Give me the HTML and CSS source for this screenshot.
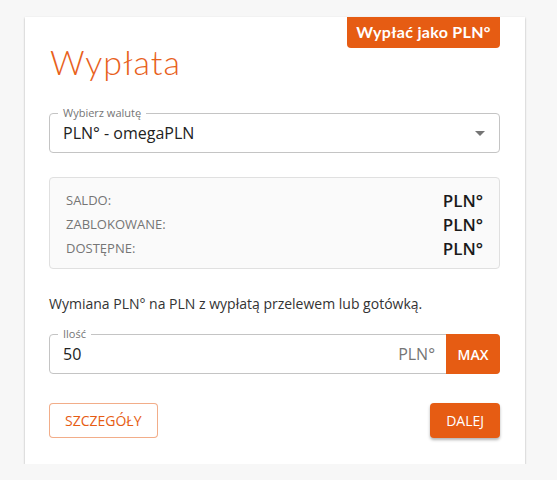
FILE: index.html
```html
<!DOCTYPE html>
<html lang="pl">
<head>
    <meta charset="UTF-8">
    <meta name="viewport" content="width=device-width, initial-scale=1.0">
    <title>Wypłata</title>
    <link rel="stylesheet" href="styles.css">
</head>
<body>
    <div class="card">
        <div class="badge">Wypłać jako PLN°</div>

        <h1 class="title">Wypłata</h1>

        <div class="field select-field">
            <span class="field-label">Wybierz walutę</span>
            <div class="field-value">PLN° - omegaPLN</div>
            <span class="arrow"></span>
        </div>

        <div class="balance-box">
            <div class="balance-row">
                <span class="balance-label">Saldo:</span>
                <span class="balance-value">PLN°</span>
            </div>
            <div class="balance-row">
                <span class="balance-label">Zablokowane:</span>
                <span class="balance-value">PLN°</span>
            </div>
            <div class="balance-row">
                <span class="balance-label">Dostępne:</span>
                <span class="balance-value">PLN°</span>
            </div>
        </div>

        <p class="description">Wymiana PLN° na PLN z wypłatą przelewem lub gotówką.</p>

        <div class="field amount-field">
            <span class="field-label">Ilość</span>
            <div class="field-value">50</div>
            <span class="unit">PLN°</span>
            <button class="max-button">MAX</button>
        </div>

        <div class="actions">
            <button class="btn btn-outline">Szczegóły</button>
            <button class="btn btn-primary">Dalej</button>
        </div>
    </div>
</body>
</html>
```

FILE: styles.css
```css
/* Base */
body {
    margin: 0;
    padding: 17px 32px 0 25px;
    background-color: #f7f7f7;
    font-family: 'Open Sans', sans-serif;
    color: #333;
}

.card {
    position: relative;
    width: 500px;
    box-sizing: border-box;
    padding: 24px 25px 26px 24px;
    background-color: #fff;
    box-shadow: 0 1px 2px rgba(0, 0, 0, 0.3);
}

/* Corner badge */
.badge {
    position: absolute;
    top: 0;
    right: 25px;
    width: 153px;
    height: 31px;
    line-height: 30px;
    text-align: center;
    background-color: #e65c13;
    color: #fff;
    font-family: 'Lato', sans-serif;
    font-weight: 700;
    font-size: 16px;
    letter-spacing: 0.3px;
    border-radius: 0 0 4px 4px;
}

.title {
    margin: 0 0 30px 1px;
    font-family: 'Lato', sans-serif;
    font-weight: 300;
    font-size: 34px;
    line-height: 42px;
    letter-spacing: 1px;
    color: #e8611c;
}

/* Outlined fields */
.field {
    position: relative;
    display: flex;
    align-items: center;
    height: 40px;
    border: 1px solid #c4c4c4;
    border-radius: 4px;
    box-sizing: border-box;
}

.field-label {
    position: absolute;
    top: -8px;
    left: 8px;
    padding: 0 5px;
    background-color: #fff;
    font-size: 11px;
    line-height: 14px;
    color: #757575;
}

.field-value {
    flex: 1;
    padding-left: 13px;
    font-size: 16px;
    color: #222;
}

.arrow {
    margin-right: 14px;
    border-left: 5px solid transparent;
    border-right: 5px solid transparent;
    border-top: 5px solid #757575;
}

/* Balance box */
.balance-box {
    margin-top: 24px;
    padding: 10px 16px 8px 16px;
    background-color: #fafafa;
    border: 1px solid #e0e0e0;
    border-radius: 4px;
}

.balance-row {
    display: flex;
    justify-content: space-between;
    align-items: center;
    height: 24px;
}

.balance-label {
    font-size: 13px;
    text-transform: uppercase;
    color: #757575;
}

.balance-value {
    font-size: 17px;
    font-weight: 600;
    color: #1a1a1a;
}

.description {
    margin: 25px 0 20px 0;
    font-size: 14px;
    line-height: 20px;
    color: #333;
}

/* Amount field */
.unit {
    margin-right: 11px;
    font-size: 16px;
    color: #757575;
}

.max-button {
    align-self: stretch;
    width: 54px;
    margin: -1px -1px -1px 0;
    border: none;
    border-radius: 0 4px 4px 0;
    background-color: #e65c13;
    color: #fff;
    font-family: 'Open Sans', sans-serif;
    font-size: 14px;
    font-weight: 600;
}

/* Buttons */
.actions {
    display: flex;
    justify-content: space-between;
    margin-top: 29px;
}

.btn {
    height: 35px;
    padding: 0 15px;
    border-radius: 4px;
    font-family: 'Open Sans', sans-serif;
    font-size: 14px;
    text-transform: uppercase;
    cursor: pointer;
}

.btn-outline {
    background-color: #fff;
    border: 1px solid rgba(230, 92, 19, 0.5);
    color: #e65c13;
}

.btn-primary {
    background-color: #e65c13;
    border: none;
    color: #fff;
    padding: 0 16px;
    box-shadow: 0 2px 3px rgba(0, 0, 0, 0.3);
}
```
